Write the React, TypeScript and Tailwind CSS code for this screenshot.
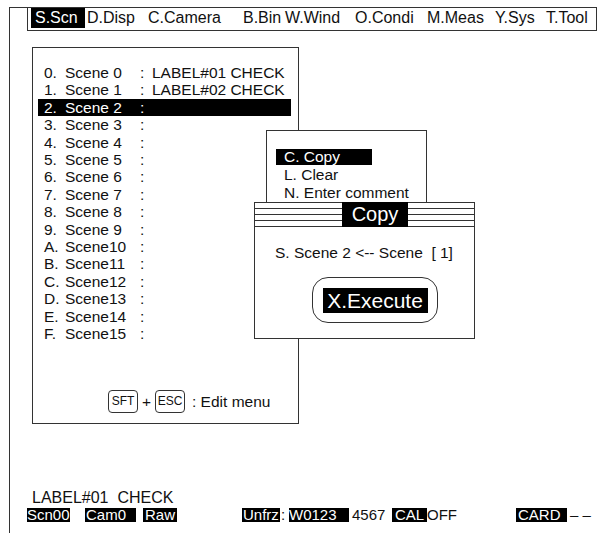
const scenes = [
  { key: "0.", name: "Scene 0", note: "LABEL#01 CHECK" },
  { key: "1.", name: "Scene 1", note: "LABEL#02 CHECK" },
  { key: "2.", name: "Scene 2", note: "", active: true },
  { key: "3.", name: "Scene 3", note: "" },
  { key: "4.", name: "Scene 4", note: "" },
  { key: "5.", name: "Scene 5", note: "" },
  { key: "6.", name: "Scene 6", note: "" },
  { key: "7.", name: "Scene 7", note: "" },
  { key: "8.", name: "Scene 8", note: "" },
  { key: "9.", name: "Scene 9", note: "" },
  { key: "A.", name: "Scene10", note: "" },
  { key: "B.", name: "Scene11", note: "" },
  { key: "C.", name: "Scene12", note: "" },
  { key: "D.", name: "Scene13", note: "" },
  { key: "E.", name: "Scene14", note: "" },
  { key: "F.", name: "Scene15", note: "" },
];

const menu = [
  { label: "D.Disp", w: "w-[61px]" },
  { label: "C.Camera", w: "w-[95px]" },
  { label: "B.Bin", w: "w-[42px]" },
  { label: "W.Wind", w: "w-[70px]" },
  { label: "O.Condi", w: "w-[72px]" },
  { label: "M.Meas", w: "w-[68px]" },
  { label: "Y.Sys", w: "w-[51px]" },
  { label: "T.Tool", w: "w-[48px]" },
];

function Lines() {
  return (
    <div className="flex flex-col">
      <div className="h-[6px] border-b border-[#333]" />
      <div className="h-[6px] border-b border-[#333]" />
      <div className="h-[6px] border-b border-[#333]" />
      <div className="h-[6px] border-b border-[#333]" />
    </div>
  );
}

export default function App() {
  return (
    <div className="w-[602px] h-[533px] bg-white relative overflow-hidden pt-[7px] pl-[9px] font-['Liberation_Sans',Arial,sans-serif] text-[#111]">
      <div className="w-[588px] h-full border-l border-t border-[#333] flex flex-col">
        {/* Menu bar */}
        <div className="ml-[17px] w-[570px] h-[23px] border-l border-r border-b border-[#333] flex items-start text-[16px] leading-[20px] whitespace-nowrap">
          <div className="ml-[3px] w-[54px] h-[20px] bg-black text-white pl-[4px]">S.Scn</div>
          {menu.map((m) => (
            <div key={m.label} className={`${m.w} h-[20px] pl-[2px]`}>
              {m.label}
            </div>
          ))}
        </div>

        {/* Scene list */}
        <div className="ml-[22px] mt-[16px] w-[267px] h-[377px] border border-[#333] flex flex-col pt-[16px] text-[15.5px] leading-[17.4px] whitespace-nowrap">
          {scenes.map((s) => (
            <div
              key={s.key}
              className={`ml-[5px] w-[253px] flex pl-[6px] ${s.active ? "bg-black text-white" : ""}`}
            >
              <span className="w-[21px]">{s.key}</span>
              <span className="w-[75px]">{s.name}</span>
              <span className="w-[12px]">:</span>
              <span>{s.note}</span>
            </div>
          ))}

          <div className="mt-auto mb-[10px] pl-[75px] flex items-center">
            <span className="w-[30px] h-[23px] rounded-[4px] border border-[#333] text-[12px] leading-[21px] text-center">SFT</span>
            <span className="w-[17px] text-center">+</span>
            <span className="w-[30px] h-[23px] rounded-[4px] border border-[#333] text-[12px] leading-[21px] text-center">ESC</span>
            <span className="ml-[7px]">: Edit menu</span>
          </div>
        </div>

        {/* Status */}
        <div className="mt-auto pb-[11px] flex flex-col whitespace-nowrap">
          <div className="pl-[22px] text-[16px] leading-[18px]">LABEL#01&nbsp;&nbsp;CHECK</div>
          <div className="pl-[17px] mt-[1px] h-[14px] flex text-[15px] leading-[14px]">
            <span className="w-[43px] bg-black text-white">Scn00</span>
            <span className="ml-[15px] w-[51px] bg-black text-white pl-[1px]">Cam0</span>
            <span className="ml-[7px] w-[34px] bg-black text-white pl-[2px]">Raw</span>
            <span className="ml-[65px] w-[38px] bg-black text-white pl-[1px]">Unfrz</span>
            <span className="w-[9px] pl-[1px]">:</span>
            <span className="w-[60px] bg-black text-white">W0123</span>
            <span className="ml-[3px] w-[40px]">4567</span>
            <span className="w-[35px] bg-black text-white pl-[3px]">CAL</span>
            <span className="w-[89px]">OFF</span>
            <span className="w-[51px] bg-black text-white pl-[2px]">CARD</span>
            <span className="ml-[3px]">– –</span>
          </div>
        </div>
      </div>

      {/* Edit popup */}
      <div className="absolute left-[266px] top-[130px] w-[161px] h-[80px] border border-[#333] bg-white pt-[17px] text-[15.5px] whitespace-nowrap">
        <div className="ml-[9px] w-[96px] h-[16px] my-[1px] leading-[16px] bg-black text-white pl-[8px]">C. Copy</div>
        <div className="h-[18px] leading-[18px] pl-[17px]">L. Clear</div>
        <div className="h-[18px] leading-[18px] pl-[17px]">N. Enter comment</div>
      </div>

      {/* Copy dialog */}
      <div className="absolute left-[254px] top-[202px] w-[221px] h-[137px] border border-[#333] bg-white flex flex-col whitespace-nowrap">
        <div className="flex h-[24px]">
          <div className="w-[87px]">
            <Lines />
          </div>
          <div className="w-[66px] -mt-[1px] h-[25px] bg-black text-white text-[20px] leading-[25px] text-center">Copy</div>
          <div className="flex-1">
            <Lines />
          </div>
        </div>
        <div className="mt-[17px] pl-[20px] text-[15.5px] leading-[18px]">S. Scene 2 &lt;-- Scene&nbsp;&nbsp;[ 1]</div>
        <div className="ml-[57px] mt-[15px] w-[126px] h-[46px] rounded-[16px] border border-[#333] flex items-center justify-center">
          <span className="w-[105px] h-[25px] bg-black text-white text-[21px] leading-[25px] text-center">X.Execute</span>
        </div>
      </div>
    </div>
  );
}
